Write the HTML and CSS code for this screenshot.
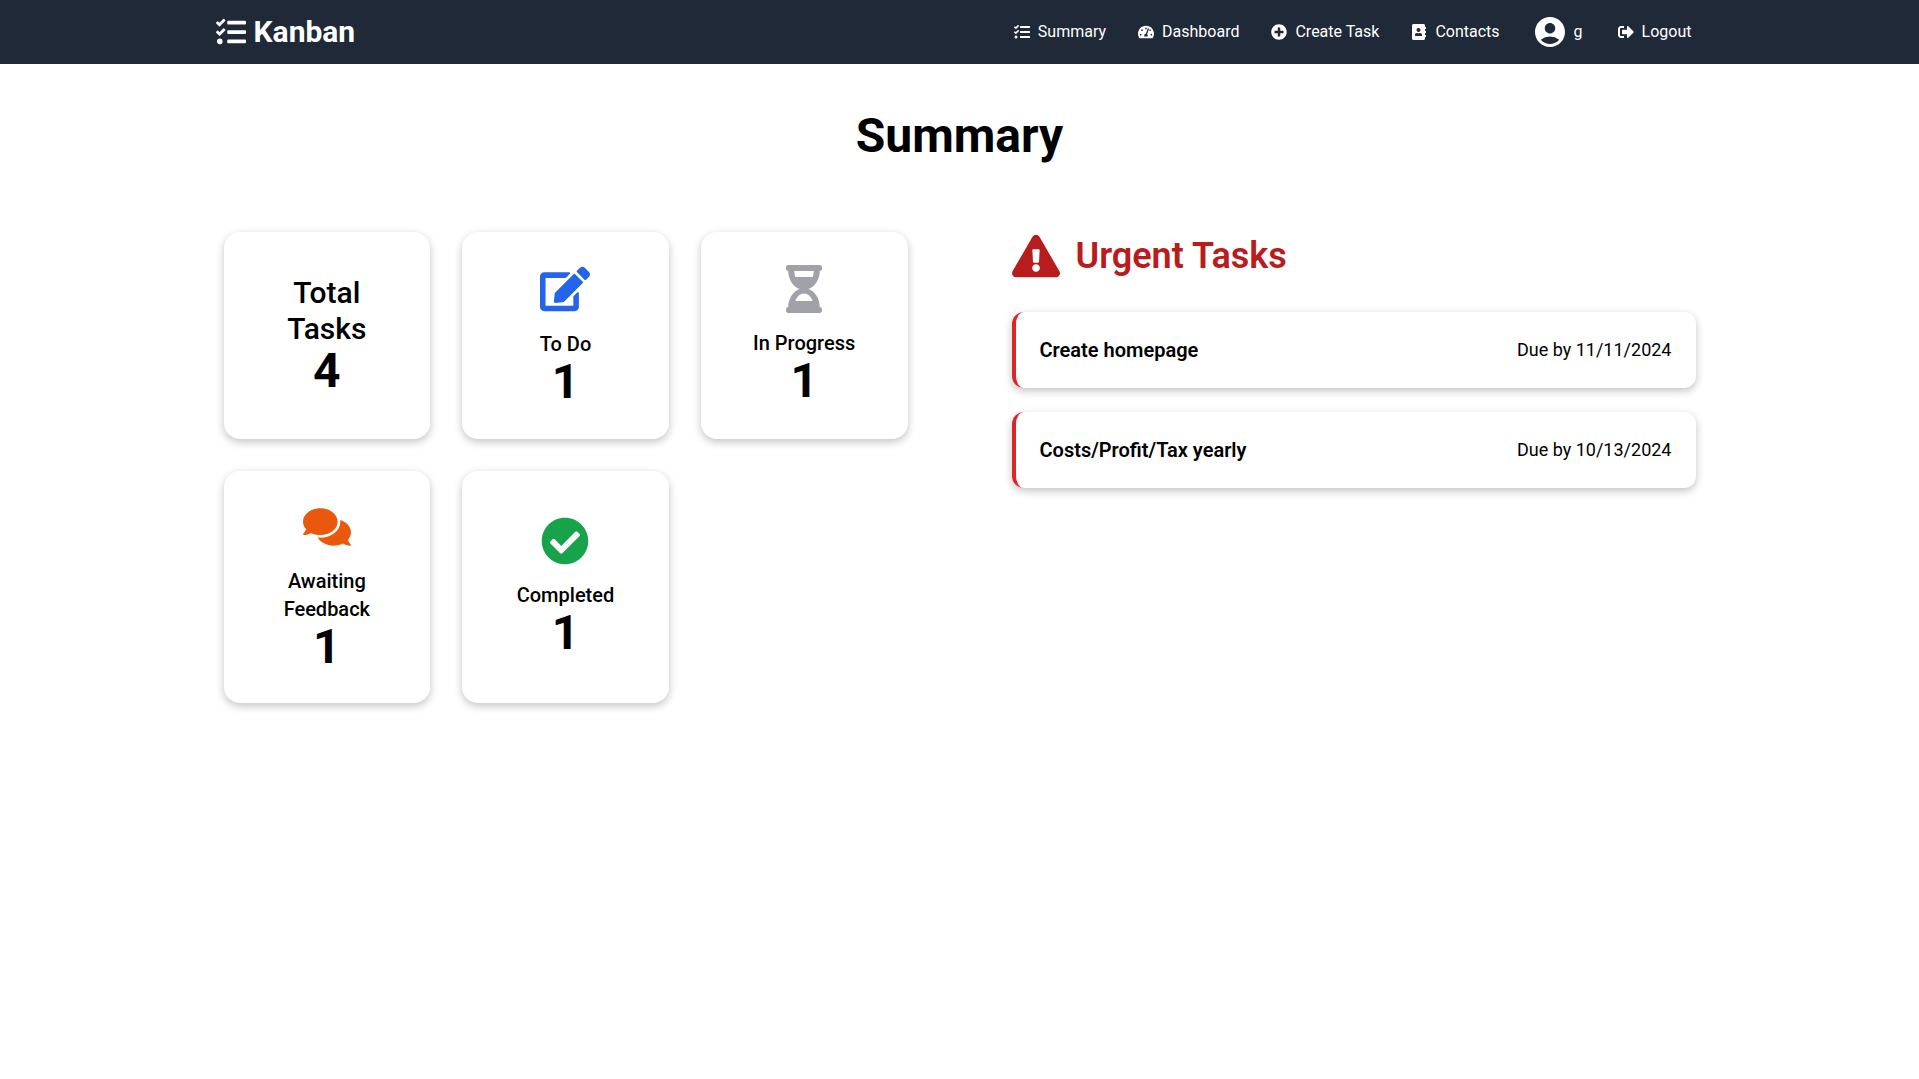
FILE: index.html
```html
<!DOCTYPE html>
<html lang="en">
<head>
<meta charset="utf-8">
<meta name="viewport" content="width=device-width, initial-scale=1">
<title>Kanban</title>
<link rel="stylesheet" href="styles.css">
</head>
<body>
<svg class="sprite" aria-hidden="true">
  <symbol id="i-tasks" viewBox="0 0 512 512"><path d="M139.61 35.5a12 12 0 0 0-17 0L58.93 98.81l-22.7-22.12a12 12 0 0 0-17 0L3.53 92.41a12 12 0 0 0 0 17l47.59 47.4a12.78 12.78 0 0 0 17.61 0l15.59-15.62L156.52 69a12.09 12.09 0 0 0 .09-17zm0 159.19a12 12 0 0 0-17 0l-63.68 63.72-22.7-22.1a12 12 0 0 0-17 0L3.53 252a12 12 0 0 0 0 17L51 316.5a12.77 12.77 0 0 0 17.6 0l15.7-15.69 72.2-72.22a12 12 0 0 0 .09-16.9zM64 368c-26.49 0-48.59 21.5-48.59 48S37.53 464 64 464a48 48 0 0 0 0-96zm432 16H208a16 16 0 0 0-16 16v32a16 16 0 0 0 16 16h288a16 16 0 0 0 16-16v-32a16 16 0 0 0-16-16zm0-320H208a16 16 0 0 0-16 16v32a16 16 0 0 0 16 16h288a16 16 0 0 0 16-16V80a16 16 0 0 0-16-16zm0 160H208a16 16 0 0 0-16 16v32a16 16 0 0 0 16 16h288a16 16 0 0 0 16-16v-32a16 16 0 0 0-16-16z"/></symbol>
</svg>

<header class="topbar">
  <nav class="topbar-inner" aria-label="Main">
    <a class="brand" href="#">
      <svg class="brand-icon" aria-hidden="true"><use href="#i-tasks"/></svg>
      <span>Kanban</span>
    </a>
    <div class="links">
      <a class="link" href="#"><svg class="link-icon" aria-hidden="true"><use href="#i-tasks"/></svg>Summary</a>
      <a class="link" href="#"><svg class="link-icon" viewBox="0 0 576 512" aria-hidden="true"><path d="M288 32C128.94 32 0 160.94 0 320c0 52.8 14.25 102.26 39.06 144.8 5.61 9.62 16.3 15.2 27.44 15.2h443c11.14 0 21.83-5.58 27.44-15.2C561.75 422.26 576 372.8 576 320c0-159.06-128.94-288-288-288zm0 64c14.71 0 26.58 10.13 30.32 23.65-1.11 2.26-2.64 4.23-3.45 6.67l-9.22 27.67c-5.13 3.49-10.97 6.01-17.64 6.01-17.67 0-32-14.33-32-32S270.33 96 288 96zM96 384c-17.67 0-32-14.33-32-32s14.33-32 32-32 32 14.33 32 32-14.33 32-32 32zm48-160c-17.67 0-32-14.33-32-32s14.33-32 32-32 32 14.33 32 32-14.33 32-32 32zm246.77-72.41l-61.33 184C343.13 347.33 352 364.54 352 384c0 11.72-3.38 22.55-8.88 32H232.88c-5.5-9.45-8.88-20.28-8.88-32 0-33.94 26.5-61.43 59.9-63.59l61.34-184.01c4.17-12.56 17.73-19.45 30.36-15.17 12.57 4.19 19.35 17.79 15.17 30.36zm14.66 57.2l15.52-46.55c3.47-1.29 7.13-2.23 11.05-2.23 17.67 0 32 14.33 32 32s-14.33 32-32 32c-11.38-.01-20.89-6.28-26.57-15.22zM480 384c-17.67 0-32-14.33-32-32s14.33-32 32-32 32 14.33 32 32-14.33 32-32 32z"/></svg>Dashboard</a>
      <a class="link" href="#"><svg class="link-icon" viewBox="0 0 512 512" aria-hidden="true"><path d="M256 8C119 8 8 119 8 256s111 248 248 248 248-111 248-248S393 8 256 8zm144 276c0 6.6-5.4 12-12 12h-92v92c0 6.6-5.4 12-12 12h-56c-6.6 0-12-5.4-12-12v-92h-92c-6.6 0-12-5.4-12-12v-56c0-6.6 5.4-12 12-12h92v-92c0-6.6 5.4-12 12-12h56c6.6 0 12 5.4 12 12v92h92c6.6 0 12 5.4 12 12v56z"/></svg>Create Task</a>
      <a class="link" href="#"><svg class="link-icon" viewBox="0 0 448 512" aria-hidden="true"><path d="M436 160c6.6 0 12-5.4 12-12v-40c0-6.6-5.4-12-12-12h-20V48c0-26.5-21.5-48-48-48H48C21.5 0 0 21.5 0 48v416c0 26.5 21.5 48 48 48h320c26.5 0 48-21.5 48-48v-48h20c6.6 0 12-5.4 12-12v-40c0-6.6-5.4-12-12-12h-20v-64h20c6.6 0 12-5.4 12-12v-40c0-6.6-5.4-12-12-12h-20v-64h20zm-228-32c35.3 0 64 28.7 64 64s-28.7 64-64 64-64-28.7-64-64 28.7-64 64-64zm112 236.8c0 10.6-10 19.2-22.4 19.2H118.4C106 384 96 375.4 96 364.8v-19.2c0-31.8 30.1-57.6 67.2-57.6h5c12.3 5.1 25.7 8 39.8 8s27.6-2.9 39.8-8h5c37.1 0 67.2 25.8 67.2 57.6v19.2z"/></svg>Contacts</a>
      <a class="link link-user" href="#"><svg class="user-icon" viewBox="0 0 24 24" aria-hidden="true"><path d="M12 2C6.48 2 2 6.48 2 12s4.48 10 10 10 10-4.48 10-10S17.52 2 12 2zm0 4c1.93 0 3.5 1.57 3.5 3.5S13.93 13 12 13s-3.5-1.57-3.5-3.5S10.07 6 12 6zm0 14c-2.03 0-4.43-.82-6.14-2.88a9.947 9.947 0 0 1 12.28 0C16.43 19.18 14.03 20 12 20z"/></svg>g</a>
      <button class="link" type="button"><svg class="link-icon" viewBox="0 0 512 512" aria-hidden="true"><path d="M497 273L329 441c-15 15-41 4.5-41-17v-96H152c-13.3 0-24-10.7-24-24v-96c0-13.3 10.7-24 24-24h136V88c0-21.4 25.9-32 41-17l168 168c9.3 9.4 9.3 24.6 0 34zM192 436v-40c0-6.6-5.4-12-12-12H96c-17.7 0-32-14.3-32-32V160c0-17.7 14.3-32 32-32h84c6.6 0 12-5.4 12-12V76c0-6.6-5.4-12-12-12H96c-53 0-96 43-96 96v192c0 53 43 96 96 96h84c6.6 0 12-5.4 12-12z"/></svg>Logout</button>
    </div>
  </nav>
</header>

<main class="page">
  <h1 class="title">Summary</h1>
  <div class="columns">
    <section class="stats" aria-label="Task counts">
      <div class="stat">
        <p class="stat-total">Total Tasks</p>
        <p class="stat-value">4</p>
      </div>
      <div class="stat">
        <svg class="stat-icon stat-icon-wide todo" viewBox="0 0 576 512" aria-hidden="true"><path d="M402.6 83.2l90.2 90.2c3.8 3.8 3.8 10 0 13.8L274.4 405.6l-92.8 10.3c-12.4 1.4-22.9-9.1-21.5-21.5l10.3-92.8L388.8 83.2c3.8-3.8 10-3.8 13.8 0zm162-22.9l-48.8-48.8c-15.2-15.2-39.9-15.2-55.2 0l-35.4 35.4c-3.8 3.8-3.8 10 0 13.8l90.2 90.2c3.8 3.8 10 3.8 13.8 0l35.4-35.4c15.2-15.3 15.2-40 0-55.2zM384 346.2V448H64V128h229.8c3.2 0 6.2-1.3 8.5-3.5l40-40c7.6-7.6 2.2-20.5-8.5-20.5H48C21.5 64 0 85.5 0 112v352c0 26.5 21.5 48 48 48h352c26.5 0 48-21.5 48-48V306.2c0-10.7-12.9-16-20.5-8.5l-40 40c-2.2 2.3-3.5 5.3-3.5 8.5z"/></svg>
        <p class="stat-label">To Do</p>
        <p class="stat-value">1</p>
      </div>
      <div class="stat">
        <svg class="stat-icon progress" viewBox="0 0 384 512" aria-hidden="true"><path d="M360 0H24C10.745 0 0 10.745 0 24v16c0 13.255 10.745 24 24 24 0 90.965 51.016 167.734 120.842 192C75.016 280.266 24 357.035 24 448c-13.255 0-24 10.745-24 24v16c0 13.255 10.745 24 24 24h336c13.255 0 24-10.745 24-24v-16c0-13.255-10.745-24-24-24 0-90.965-51.016-167.734-120.842-192C308.984 231.734 360 154.965 360 64c13.255 0 24-10.745 24-24V24c0-13.255-10.745-24-24-24zm-75.078 384H99.08c17.059-46.797 52.096-80 92.92-80 40.821 0 75.862 33.196 92.922 80zm.019-256H99.078C91.988 108.548 88 86.748 88 64h208c0 22.805-3.987 44.587-11.059 64z"/></svg>
        <p class="stat-label">In Progress</p>
        <p class="stat-value">1</p>
      </div>
      <div class="stat">
        <svg class="stat-icon feedback" viewBox="0 0 576 512" aria-hidden="true"><path d="M416 192c0-88.4-93.1-160-208-160S0 103.6 0 192c0 34.3 14.1 65.9 38 92-13.4 30.2-35.5 54.2-35.8 54.5-2.2 2.3-2.8 5.7-1.5 8.7S4.8 352 8 352c36.6 0 66.9-12.3 88.7-25 32.2 15.7 70.3 25 111.3 25 114.9 0 208-71.6 208-160zm122 220c23.9-26 38-57.7 38-92 0-66.9-53.5-124.2-129.3-148.1.9 6.6 1.3 13.3 1.3 20.1 0 105.9-107.7 192-240 192-10.8 0-21.3-.8-31.7-1.9C207.8 439.6 281.8 480 368 480c41 0 79.1-9.2 111.3-25 21.8 12.7 52.1 25 88.7 25 3.2 0 6.1-1.9 7.3-4.8 1.3-2.9.7-6.3-1.5-8.7-.3-.3-22.4-24.2-35.8-54.5z"/></svg>
        <p class="stat-label">Awaiting Feedback</p>
        <p class="stat-value">1</p>
      </div>
      <div class="stat">
        <svg class="stat-icon done" viewBox="0 0 512 512" aria-hidden="true"><path d="M504 256c0 136.967-111.033 248-248 248S8 392.967 8 256 119.033 8 256 8s248 111.033 248 248zM227.314 387.314l184-184c6.248-6.248 6.248-16.379 0-22.627l-22.627-22.627c-6.248-6.249-16.379-6.249-22.628 0L216 308.118l-70.059-70.059c-6.248-6.248-16.379-6.248-22.628 0l-22.627 22.627c-6.248 6.248-6.248 16.379 0 22.627l104 104c6.249 6.249 16.379 6.249 22.628.001z"/></svg>
        <p class="stat-label">Completed</p>
        <p class="stat-value">1</p>
      </div>
    </section>

    <section class="urgent" aria-labelledby="urgent-title">
      <div class="urgent-head">
        <svg class="urgent-icon" viewBox="0 0 576 512" aria-hidden="true"><path d="M569.517 440.013C587.975 472.007 564.806 512 527.94 512H48.054c-36.937 0-59.999-40.055-41.577-71.987L246.423 23.985c18.467-32.009 64.72-31.951 83.154 0l239.94 416.028zM288 354c-25.405 0-46 20.595-46 46s20.595 46 46 46 46-20.595 46-46-20.595-46-46-46zm-43.673-165.346l7.418 136c.347 6.364 5.609 11.346 11.982 11.346h48.546c6.373 0 11.635-4.982 11.982-11.346l7.418-136c.375-6.874-5.098-12.654-11.982-12.654h-63.383c-6.884 0-12.356 5.78-11.981 12.654z"/></svg>
        <h2 class="urgent-title" id="urgent-title">Urgent Tasks</h2>
      </div>
      <ul class="tasks">
        <li class="task"><h3 class="task-name">Create homepage</h3><p class="task-due">Due by 11/11/2024</p></li>
        <li class="task"><h3 class="task-name">Costs/Profit/Tax yearly</h3><p class="task-due">Due by 10/13/2024</p></li>
      </ul>
    </section>
  </div>
</main>
</body>
</html>
```
FILE: styles.css
```css
*,
*::before,
*::after {
  box-sizing: border-box;
}

body,
h1,
h2,
h3,
p,
ul {
  margin: 0;
  padding: 0;
}

body {
  background: #fff;
  color: #000;
  font-family: Roboto, sans-serif;
  font-size: 16px;
  line-height: 24px;
}

svg {
  display: block;
  flex-shrink: 0;
  fill: currentColor;
}

.sprite {
  display: none;
}

/* Top bar */
.topbar {
  background: #1f2937;
  color: #fff;
}

.topbar-inner {
  display: flex;
  align-items: center;
  justify-content: space-between;
  max-width: 1536px;
  min-height: 64px;
  margin: 0 auto;
  padding: 0 24px;
}

.brand {
  display: flex;
  align-items: center;
  gap: 8px;
  color: inherit;
  font-size: 30px;
  font-weight: 700;
  line-height: 36px;
  text-decoration: none;
}

.brand-icon {
  width: 30px;
  height: 30px;
}

.links {
  display: flex;
  align-items: center;
  gap: 8px;
}

.link {
  display: flex;
  align-items: center;
  gap: 8px;
  padding: 8px 12px;
  border: 0;
  background: none;
  color: inherit;
  font: inherit;
  text-decoration: none;
  cursor: pointer;
}

.link-icon {
  width: 16px;
  height: 16px;
}

.link-user {
  gap: 6px;
  padding-right: 15px;
}

.user-icon {
  width: 36px;
  height: 36px;
}

/* Page */
.page {
  max-width: 1536px;
  margin: 0 auto;
  padding: 48px 32px;
}

.title {
  margin-bottom: 72px;
  font-size: 48px;
  font-weight: 700;
  line-height: 48px;
  text-align: center;
}

.columns {
  display: grid;
  grid-template-columns: repeat(2, minmax(0, 1fr));
  gap: 104px;
}

/* Count cards */
.stats {
  display: grid;
  grid-template-columns: repeat(3, minmax(0, 1fr));
  align-content: start;
  align-items: stretch;
  justify-items: stretch;
  gap: 32px;
}

.stat {
  display: flex;
  flex-direction: column;
  align-items: center;
  justify-content: center;
  aspect-ratio: 1;
  padding: 32px;
  border-radius: 16px;
  background: #fff;
  box-shadow: 0 3px 8px rgba(0, 0, 0, 0.24);
  text-align: center;
}

.stat-icon {
  width: 48px;
  height: 48px;
  margin-bottom: 16px;
}

.stat-icon-wide {
  width: 50px;
  height: 50px;
}

.todo {
  color: #2563eb;
}

.progress {
  color: #a1a1aa;
}

.feedback {
  color: #ea580c;
}

.done {
  color: #16a34a;
}

.stat-label {
  font-size: 20px;
  font-weight: 500;
  line-height: 28px;
}

.stat-total {
  font-size: 30px;
  font-weight: 500;
  line-height: 36px;
}

.stat-value {
  font-size: 48px;
  font-weight: 700;
  line-height: 48px;
}

/* Urgent tasks */
.urgent-head {
  display: flex;
  align-items: center;
  gap: 16px;
  margin-bottom: 32px;
  color: #b91c1c;
}

.urgent-icon {
  width: 48px;
  height: 48px;
}

.urgent-title {
  font-size: 36px;
  font-weight: 600;
  line-height: 40px;
}

.tasks {
  display: grid;
  gap: 24px;
  list-style: none;
}

.task {
  display: flex;
  align-items: center;
  justify-content: space-between;
  padding: 24px;
  border-left: 4px solid #dc2626;
  border-radius: 12px;
  background: #fff;
  box-shadow: 0 3px 8px rgba(0, 0, 0, 0.24);
}

.task-name {
  font-size: 20px;
  font-weight: 600;
  line-height: 28px;
}

.task-due {
  font-size: 18px;
  line-height: 28px;
}
```
